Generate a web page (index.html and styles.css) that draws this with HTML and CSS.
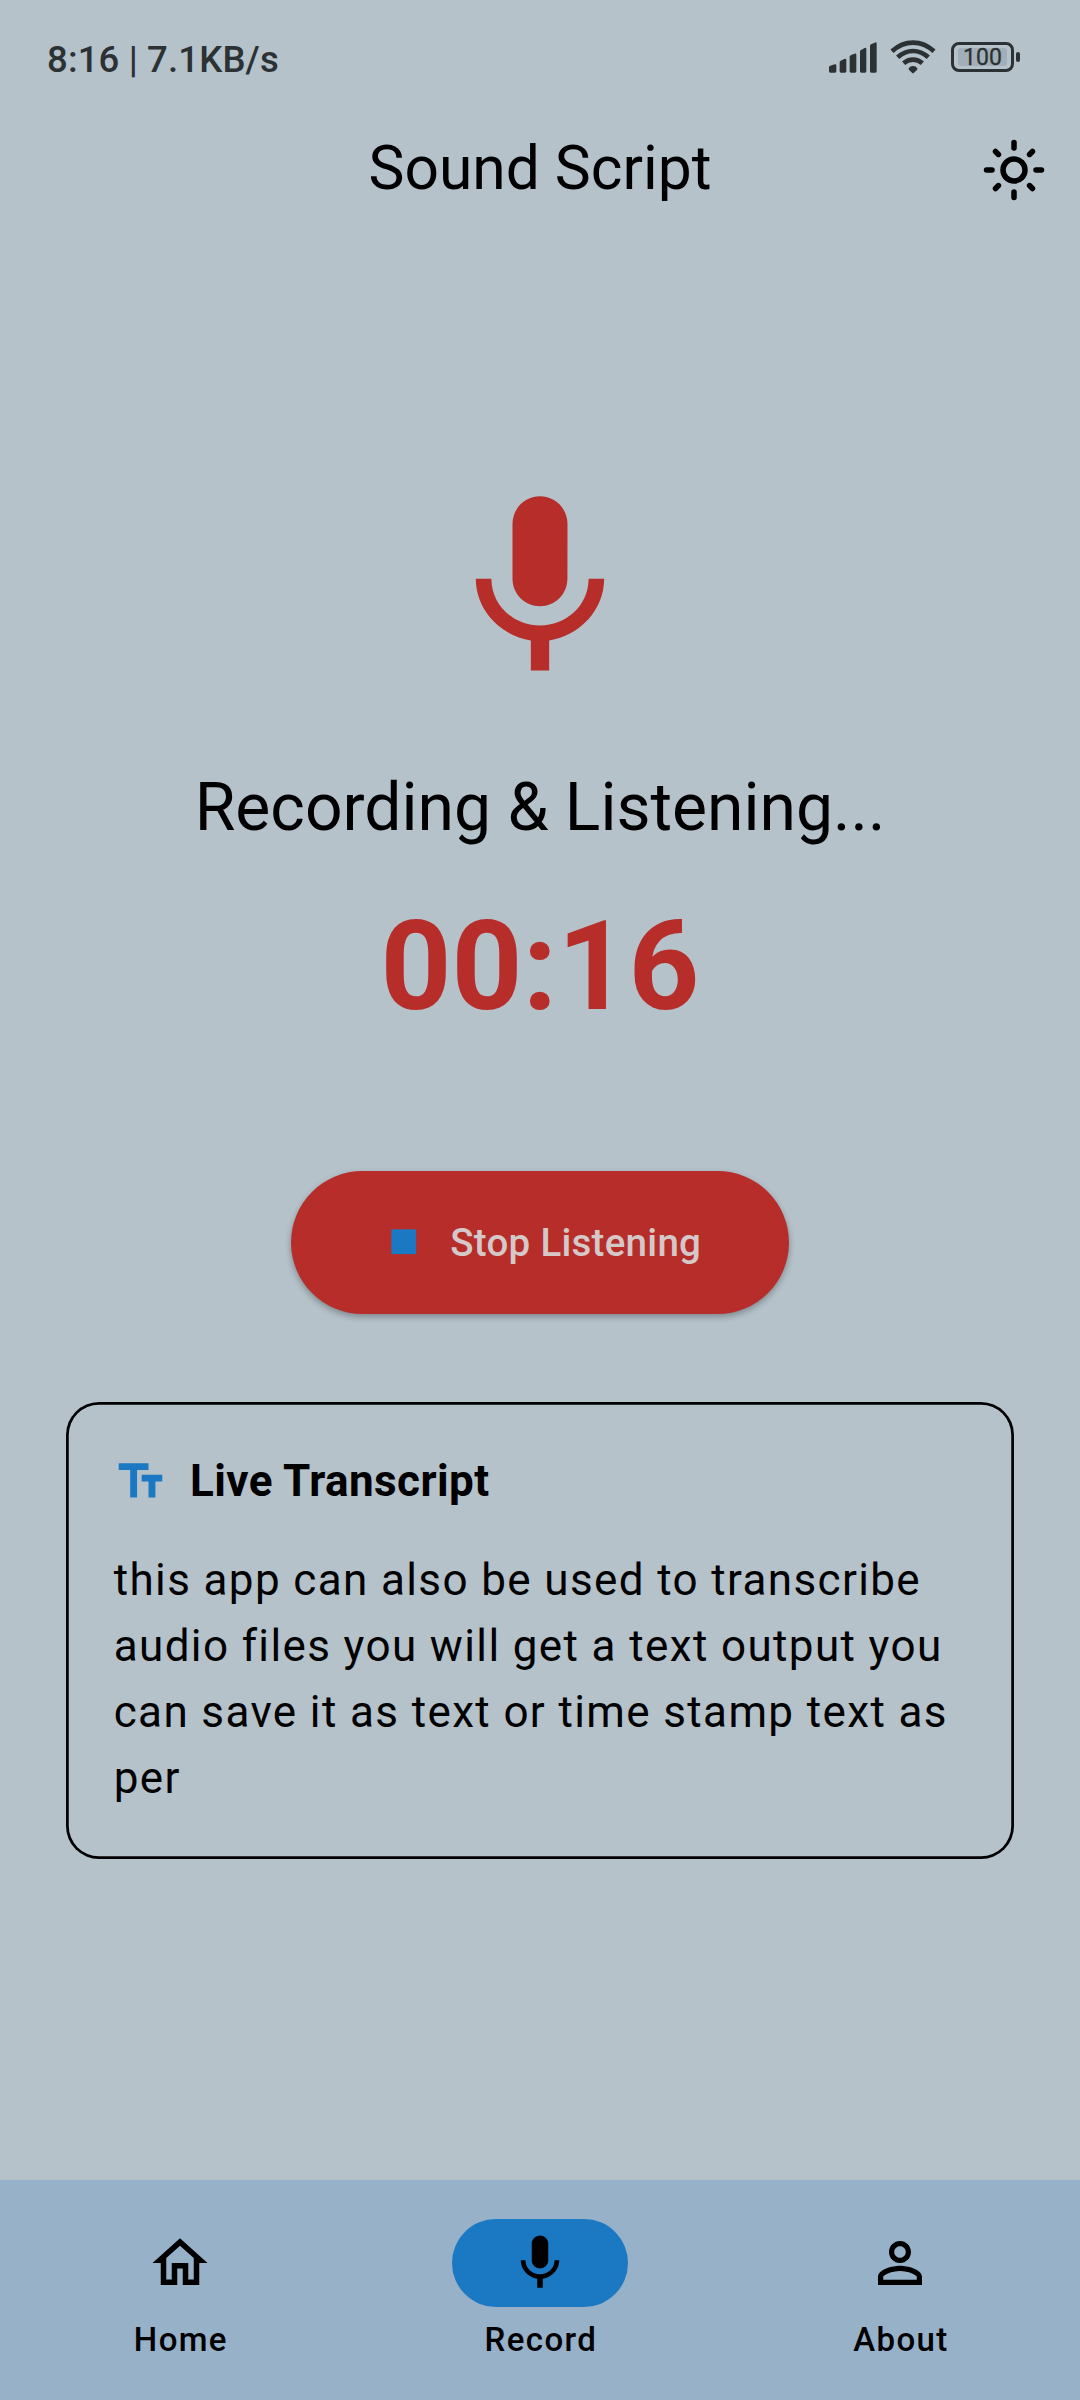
FILE: index.html
```html
<!DOCTYPE html>
<html lang="en">
<head>
<meta charset="utf-8">
<title>Sound Script</title>
<link rel="stylesheet" href="styles.css">
</head>
<body>
<div class="status-bar">
  <span class="status-text">8:16 | 7.1KB/s</span>
  <div class="status-icons">
    <svg class="signal" viewBox="0 0 144 93" aria-hidden="true">
      <path d="M0 76Q0 72 4 71L17 67Q22 66 22 70V88Q22 92 18 92H4Q0 92 0 88ZM32 60Q32 58 35 56L46 51Q52 49 52 54V88Q52 92 48 92H36Q32 92 32 88ZM62 44Q62 42 65 40L76 35Q82 33 82 38V88Q82 92 78 92H66Q62 92 62 88ZM93 28Q93 26 96 24L107 18Q112 16 112 21V88Q112 92 108 92H97Q93 92 93 88ZM123 12Q123 9 126 7L137 2Q143 -1 143 5V88Q143 92 139 92H127Q123 92 123 88Z"/>
    </svg>
    <svg class="wifi" viewBox="0 0 138 102" aria-hidden="true">
      <path class="wifi-arc" d="M6 34Q34 8 69 8T132 34M23 52Q44 33 69 33T115 52M41 70Q53 59 69 59T97 70"/>
      <path d="M69 78Q78 78 82 85Q83 88 80 91L72 98Q69 101 66 98L58 91Q55 88 56 85Q60 78 69 78Z"/>
    </svg>
    <div class="battery">
      <div class="battery-body"><span class="battery-level">100</span></div>
      <div class="battery-tip"></div>
    </div>
  </div>
</div>

<header class="app-bar">
  <h1 class="app-title">Sound Script</h1>
  <svg class="theme-icon" viewBox="0 0 24 24" aria-hidden="true">
    <circle cx="12" cy="12" r="4"/>
    <path d="M12 2v2M12 20v2M2 12h2M20 12h2M5.28 5.28l1.06 1.06M17.66 17.66l1.06 1.06M5.28 18.72l1.06-1.06M17.66 6.34l1.06-1.06"/>
  </svg>
</header>

<main class="recorder">
  <svg class="mic" viewBox="0 0 24 24" aria-hidden="true"><path d="M12 14c1.66 0 2.99-1.34 2.99-3L15 5c0-1.66-1.34-3-3-3S9 3.34 9 5v6c0 1.66 1.34 3 3 3zm5.3-3c0 3-2.54 5.1-5.3 5.1S6.7 14 6.7 11H5c0 3.41 2.72 6.23 6 6.72V21h2v-3.28c3.28-.48 6-3.3 6-6.72h-1.7z"/></svg>
  <p class="state">Recording &amp; Listening...</p>
  <p class="timer">00:16</p>
  <button class="stop" type="button">
    <svg class="stop-icon" viewBox="0 0 24 24" aria-hidden="true"><path d="M6 6h12v12H6z"/></svg>
    <span>Stop Listening</span>
  </button>
  <section class="transcript">
    <div class="transcript-head">
      <svg class="text-icon" viewBox="0 0 24 24" aria-hidden="true"><path d="M2.5 4v3h5v12h3V7h5V4h-13zm19 5h-9v3h3v7h3v-7h3V9z"/></svg>
      <h2 class="transcript-title">Live Transcript</h2>
    </div>
    <p class="transcript-text">this app can also be used to transcribe audio files you will get a text output you can save it as text or time stamp text as per</p>
  </section>
</main>

<nav class="nav">
  <a class="nav-item">
    <span class="pill"><svg class="nav-icon" viewBox="0 0 24 24" aria-hidden="true"><path d="M12 5.69l5 4.5V18h-2v-6H9v6H7v-7.81l5-4.5M12 3L2 12h3v8h6v-6h2v6h6v-8h3L12 3z"/></svg></span>
    <span class="nav-label">Home</span>
  </a>
  <a class="nav-item">
    <span class="pill pill-active"><svg class="nav-icon" viewBox="0 0 24 24" aria-hidden="true"><path d="M12 14c1.66 0 2.99-1.34 2.99-3L15 5c0-1.66-1.34-3-3-3S9 3.34 9 5v6c0 1.66 1.34 3 3 3zm5.3-3c0 3-2.54 5.1-5.3 5.1S6.7 14 6.7 11H5c0 3.41 2.72 6.23 6 6.72V21h2v-3.28c3.28-.48 6-3.3 6-6.72h-1.7z"/></svg></span>
    <span class="nav-label">Record</span>
  </a>
  <a class="nav-item">
    <span class="pill"><svg class="nav-icon" viewBox="0 0 24 24" aria-hidden="true"><path d="M12 5.9c1.16 0 2.1.94 2.1 2.1s-.94 2.1-2.1 2.1S9.9 9.16 9.9 8s.94-2.1 2.1-2.1m0 9c2.97 0 6.1 1.46 6.1 2.1v1.1H5.9V17c0-.64 3.13-2.1 6.1-2.1M12 4C9.79 4 8 5.79 8 8s1.79 4 4 4 4-1.79 4-4-1.79-4-4-4zm0 9c-2.67 0-8 1.34-8 4v3h16v-3c0-2.66-5.33-4-8-4z"/></svg></span>
    <span class="nav-label">About</span>
  </a>
</nav>
</body>
</html>
```
FILE: styles.css
```css
* {
  box-sizing: border-box;
}

body {
  display: flex;
  flex-direction: column;
  width: 1080px;
  height: 2400px;
  margin: 0;
  overflow: hidden;
  background: #b5c2ca;
  color: #000;
  font-family: Roboto, "Liberation Sans", sans-serif;
}

h1, h2, p {
  margin: 0;
  font-weight: 400;
}

svg {
  display: block;
  flex: none;
}

.status-bar {
  display: flex;
  justify-content: space-between;
  height: 93px;
  padding: 37px 60px 0 47px;
  color: #2c3133;
}

.status-text {
  padding-top: 1px;
  font-size: 36.5px;
  font-weight: 500;
  line-height: 44px;
  letter-spacing: 0.15px;
}

.status-icons {
  display: flex;
  align-items: flex-start;
  padding-top: 3px;
  fill: #2c3133;
}

.signal {
  width: 48px;
  height: 31px;
  margin: 2px 13px 0 0;
}

.wifi {
  width: 46px;
  height: 34px;
  margin-right: 15px;
}

.wifi-arc {
  fill: none;
  stroke: #2c3133;
  stroke-width: 14;
}

.battery {
  display: flex;
  align-items: center;
  gap: 2px;
  margin-top: 2px;
}

.battery-body {
  width: 63px;
  height: 30px;
  padding: 3px 4px;
  border: 3px solid #2c3133;
  border-radius: 8px;
}

.battery-level {
  display: block;
  height: 18px;
  border-radius: 3px;
  background: #a2afb8;
  font-size: 23px;
  font-weight: 400;
  line-height: 19px;
  text-align: center;
  -webkit-text-stroke: 0.3px #2c3133;
}

.battery-tip {
  width: 4px;
  height: 10px;
  border-radius: 2px;
  background: #2c3133;
}

.app-bar {
  display: grid;
  grid-template-columns: 66px 1fr 66px;
  align-items: center;
  height: 154px;
  padding: 0 33px;
}

.app-title {
  grid-column: 2;
  padding-bottom: 3px;
  font-size: 60.5px;
  line-height: 77px;
  text-align: center;
}

.theme-icon {
  width: 66px;
  height: 66px;
  fill: none;
  stroke: #000;
  stroke-width: 2;
  stroke-linecap: round;
}

.recorder {
  display: flex;
  flex: 1;
  flex-direction: column;
  align-items: center;
  padding: 230.7px 66px 0;
}

.mic {
  width: 220px;
  height: 220px;
  margin-bottom: 66px;
  fill: #b62d2a;
}

.state {
  margin-bottom: 43px;
  font-size: 66px;
  line-height: 88px;
}

.timer {
  margin-bottom: 133px;
  color: #b62d2a;
  font-size: 123.75px;
  font-weight: 700;
  line-height: 143px;
}

.stop {
  display: flex;
  align-items: center;
  gap: 22px;
  height: 143px;
  margin: 0 0 88.5px;
  padding: 0 88px;
  border: 0;
  border-radius: 72px;
  background: #b62d2a;
  box-shadow: 0 3px 6px rgba(0, 0, 0, 0.3);
  color: #d4c8c8;
  font: 500 38.5px/55px Roboto, "Liberation Sans", sans-serif;
  letter-spacing: 0.275px;
}

.stop-icon {
  width: 49.5px;
  height: 49.5px;
  fill: #1b78c2;
}

.transcript {
  width: 948px;
  padding: 45.75px 46px 47.75px 47px;
  border-radius: 33px;
  box-shadow: inset 0 0 0 2.75px #000;
}

.transcript-head {
  display: flex;
  align-items: center;
  gap: 22px;
  margin-bottom: 33px;
}

.text-icon {
  width: 55px;
  height: 55px;
  margin-top: 1px;
  fill: #1b78c2;
}

.transcript-title {
  font-size: 44px;
  font-weight: 700;
  line-height: 66px;
  letter-spacing: 0.41px;
}

.transcript-text {
  padding-left: 0.7px;
  font-size: 44px;
  line-height: 66px;
  letter-spacing: 1.375px;
}

.nav {
  display: grid;
  grid-template-columns: repeat(3, 1fr);
  height: 220px;
  padding-top: 38.5px;
  background: #96b1c8;
}

.nav-item {
  display: flex;
  flex-direction: column;
  align-items: center;
  gap: 11px;
}

.pill {
  display: flex;
  align-items: center;
  justify-content: center;
  width: 176px;
  height: 88px;
  border-radius: 44px;
}

.pill-active {
  background: #1b78c2;
}

.nav-icon {
  width: 66px;
  height: 66px;
}

.nav-label {
  padding-left: 1.8px;
  font-size: 33px;
  font-weight: 500;
  line-height: 44px;
  letter-spacing: 1.375px;
}
```
